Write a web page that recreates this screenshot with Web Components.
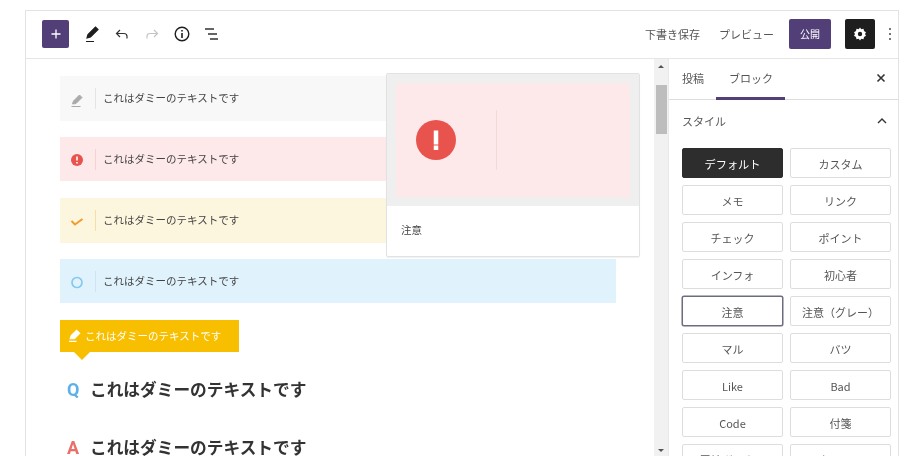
<!DOCTYPE html>
<html lang="ja">
<head>
<meta charset="utf-8">
<title>エディター</title>
<style>
  html, body { margin: 0; height: 456px; overflow: hidden; background: #fff; }
  body { font-family: "Noto Sans CJK JP", "Noto Sans", sans-serif; color: #444; }
</style>
</head>
<body>
<editor-frame>
  <editor-toolbar slot="top"></editor-toolbar>
  <editor-content slot="main">
    <notice-block kind="memo">これはダミーのテキストです</notice-block>
    <notice-block kind="alert">これはダミーのテキストです</notice-block>
    <notice-block kind="check">これはダミーのテキストです</notice-block>
    <notice-block kind="maru">これはダミーのテキストです</notice-block>
    <label-box>これはダミーのテキストです</label-box>
    <faq-line letter="Q" color="#5db1e8">これはダミーのテキストです</faq-line>
    <faq-line letter="A" color="#e8706a">これはダミーのテキストです</faq-line>
    <style-preview></style-preview>
  </editor-content>
  <editor-sidebar slot="side"></editor-sidebar>
</editor-frame>

<script>
// outer box of the editor, cut off by the bottom of the window
customElements.define('editor-frame', class extends HTMLElement {
  constructor() {
    super();
    this.attachShadow({ mode: 'open' }).innerHTML = `
      <style>
        :host { display: block; box-sizing: border-box; width: 874px; height: 446px; margin: 10px 0 0 25px;
          border: solid #e2e2e2; border-width: 1px 1px 0 1px; filter: blur(.45px); }
        .top { height: 47px; border-bottom: 1px solid #e6e6e6; }
        .body { display: flex; height: 397px; }
        .main { flex: 1; min-width: 0; position: relative; overflow: hidden; }
        .bar { width: 15px; background: #f1f1f1; border-right: 1px solid #e8e8e8; display: flex; flex-direction: column; align-items: center; box-sizing: border-box; flex: none; }
        .up, .down { width: 0; height: 0; border: 3px solid transparent; }
        .up { border-bottom: 3px solid #555; margin-top: 3px; }
        .thumb { width: 11px; height: 49px; background: #bdbdbd; margin-top: 17px; }
        .down { border-top: 3px solid #555; margin-top: auto; margin-bottom: 1px; }
        .side { width: 229px; flex: none; }
      </style>
      <div class="top"><slot name="top"></slot></div>
      <div class="body">
        <div class="main"><slot name="main"></slot></div>
        <div class="bar"><i class="up"></i><i class="thumb"></i><i class="down"></i></div>
        <div class="side"><slot name="side"></slot></div>
      </div>`;
  }
});

customElements.define('editor-toolbar', class extends HTMLElement {
  constructor() {
    super();
    this.attachShadow({ mode: 'open' }).innerHTML = `
      <style>
        :host { display: flex; align-items: center; height: 45px; padding-left: 16px; font-size: 11px; color: #555; }
        .add { width: 27px; height: 28px; border-radius: 2px; background: #523f78; display: grid; place-items: center; margin-right: 13px; }
        svg { display: block; flex: none; }
        .left { display: flex; align-items: center; }
        .left svg + svg { margin-left: 10px; }
        .right { margin-left: auto; display: flex; align-items: center; }
        .draft { margin-right: 19px; }
        .pub { width: 42px; height: 30px; border-radius: 2px; background: #523f78; color: #fff; display: grid; place-items: center; margin: 0 14px 0 15px; font-size: 10px; }
        .gear { width: 30px; height: 30px; border-radius: 2px; background: #1e1e1e; display: grid; place-items: center; }
        .more { margin: 0 6px 0 13px; }
      </style>
      <div class="left">
        <div class="add"><svg width="12" height="12" viewBox="0 0 12 12"><path d="M6 1.500v9M1.500 6h9" stroke="#fff" stroke-width="1.300"/></svg></div>
        <svg width="20" height="20" viewBox="0 0 20 20"><path d="M5 14l1-3.500 7.500-7.500 2.500 2.500-7.500 7.500zM4 17.500h8" fill="#1e1e1e" stroke="#1e1e1e" stroke-width="1.200"/></svg>
        <svg width="20" height="20" viewBox="0 0 20 20"><path d="M8 6L4.500 9.500 8 13M5 9.500h7q3 0 3 3v2" fill="none" stroke="#333" stroke-width="1.200"/></svg>
        <svg width="20" height="20" viewBox="0 0 20 20"><path d="M12 6l3.500 3.500L12 13M15 9.500H8q-3 0-3 3v2" fill="none" stroke="#c4c4c4" stroke-width="1.200"/></svg>
        <svg width="20" height="20" viewBox="0 0 20 20"><circle cx="10" cy="10" r="6.800" fill="none" stroke="#1e1e1e" stroke-width="1.400"/><path d="M10 9v5M10 6v1.600" stroke="#1e1e1e" stroke-width="1.600"/></svg>
        <svg width="20" height="20" viewBox="0 0 20 20"><path d="M3 5h9M6 10h9M8 15h8" stroke="#333" stroke-width="1.400"/></svg>
      </div>
      <div class="right">
        <span class="draft">下書き保存</span><span>プレビュー</span>
        <span class="pub">公開</span>
        <span class="gear"><svg width="16" height="16" viewBox="0 0 16 16"><path d="M8 1.500l1.300 1.800 2.200-.5.500 2.200 2 1.200L13 8l1 1.800-2 1.200-.5 2.200-2.200-.5L8 14.500l-1.300-1.800-2.200.5-.5-2.200-2-1.200L3 8 2 6.200l2-1.200.5-2.200 2.200.5z" fill="#fff"/><circle cx="8" cy="8" r="2.200" fill="#1e1e1e"/></svg></span>
        <svg class="more" width="4" height="14" viewBox="0 0 4 14"><path d="M2 1v2M2 6v2M2 11v2" stroke="#555" stroke-width="1.600"/></svg>
      </div>`;
  }
});

customElements.define('editor-content', class extends HTMLElement {
  constructor() {
    super();
    this.attachShadow({ mode: 'open' }).innerHTML = `
      <style>
        :host { display: block; height: 397px; padding: 17px 0 0 34px; box-sizing: border-box; }
      </style>
      <slot></slot>`;
  }
});

// icon and tint for each notice style
const NOTICE = {
  memo: { bg: '#f8f8f8', line: '#e4e4e4', h: 45, gap: 16, icon: '<path d="M3.500 12l1-3 6-6 2.500 2.500-6 6zM2.500 14.500h9" fill="#aaa" stroke="#aaa"/>' },
  alert: { bg: '#fde9ea', line: '#f2d4d4', h: 44, gap: 17, icon: '<circle cx="8" cy="8" r="6" fill="#e8534e"/><path d="M8 4.500v4M8 10v1.500" stroke="#fff" stroke-width="1.600"/>' },
  check: { bg: '#fdf6df', line: '#f5dfa8', h: 45, gap: 16, icon: '<path d="M2.500 7l3.500 3.500 7.500-5.500" fill="none" stroke="#f29a2e" stroke-width="2"/>' },
  maru: { bg: '#e0f3fd', line: '#cce4f4', h: 44, gap: 17, icon: '<circle cx="8" cy="8.500" r="5" fill="none" stroke="#86c8f0" stroke-width="1.700"/>' }
};

customElements.define('notice-block', class extends HTMLElement {
  constructor() {
    super();
    const n = NOTICE[this.getAttribute('kind')];
    this.attachShadow({ mode: 'open' }).innerHTML = `
      <style>
        :host { display: flex; align-items: center; width: 556px; height: ${n.h}px; margin-bottom: ${n.gap}px; background: ${n.bg}; font-size: 10.500px; color: #444; }
        svg { margin-left: 9px; flex: none; position: relative; top: 1px; }
        .txt { margin-left: 10px; padding-left: 7px; border-left: 1px solid ${n.line}; height: 21px; line-height: 19px; }
      </style>
      <svg width="16" height="16" viewBox="0 0 16 16">${n.icon}</svg>
      <span class="txt"><slot></slot></span>`;
  }
});

customElements.define('label-box', class extends HTMLElement {
  constructor() {
    super();
    this.attachShadow({ mode: 'open' }).innerHTML = `
      <style>
        :host { display: flex; align-items: center; width: 179px; height: 32px; background: #f8bf00; color: #fff; font-size: 10.500px; position: relative; box-sizing: border-box; padding: 0 0 2px 8px; }
        svg { margin-right: 2px; flex: none; }
        :host::after { content: ""; position: absolute; left: 14px; top: 32px; border: 8px solid transparent; border-top-color: #f8bf00; border-bottom-width: 0; }
      </style>
      <svg width="15" height="15" viewBox="0 0 14 14"><path d="M2 10l1-3 5-5 3 3-5 5zM1 12.500h7" fill="#fff" stroke="#fff"/></svg>
      <slot></slot>`;
  }
});

customElements.define('faq-line', class extends HTMLElement {
  constructor() {
    super();
    this.attachShadow({ mode: 'open' }).innerHTML = `
      <style>
        :host { display: flex; align-items: baseline; height: 24px; line-height: 24px; margin: 25px 0 0 7px; font-size: 16.700px; font-weight: 700; color: #333; }
        :host(:last-of-type) { margin-top: 34px; }
        b { width: 23px; font-family: Roboto, sans-serif; font-weight: 700; font-size: 18px; flex: none; }
      </style>
      <b style="color:${this.getAttribute('color')}">${this.getAttribute('letter')}</b>
      <slot></slot>`;
  }
});

// hover preview that lies over the notices
customElements.define('style-preview', class extends HTMLElement {
  constructor() {
    super();
    this.attachShadow({ mode: 'open' }).innerHTML = `
      <style>
        :host { position: absolute; left: 360px; top: 14px; width: 254px; height: 184px; box-sizing: border-box; background: #fff; border: 1px solid #e2e2e2; border-radius: 2px; box-shadow: 0 1px 1px rgba(0,0,0,.06); font-size: 10.500px; color: #444; }
        .shot { height: 132px; box-sizing: border-box; background: #efefef; padding: 9px; }
        .pink { height: 100%; background: #fde9ea; display: flex; align-items: center; padding-left: 20px; }
        .pink svg { flex: none; }
        .pink i { margin-left: 40px; width: 1px; height: 60px; background: #f2dada; }
        .name { display: flex; align-items: center; height: 46px; padding-left: 14px; }
      </style>
      <div class="shot"><div class="pink">
        <svg width="40" height="40" viewBox="0 0 40 40"><circle cx="20" cy="20" r="20" fill="#e8534e"/><path d="M20 10.500v14M20 25.500v4.500" stroke="#fff" stroke-width="4.500"/></svg>
        <i></i>
      </div></div>
      <div class="name">注意</div>`;
  }
});

customElements.define('style-button', class extends HTMLElement {
  constructor() {
    super();
    this.attachShadow({ mode: 'open' }).innerHTML = `
      <style>
        :host { display: grid; place-items: center; height: 30px; box-sizing: border-box; padding-top: 1px; border: 1px solid #ddd; border-radius: 2px; background: #fff; font-size: 11px; color: #555; overflow: hidden; }
        :host([on]) { background: #2d2d2d; border-color: #2d2d2d; color: #fff; font-size: 11.200px; }
        :host([hover]) { border-color: #6c6c80; box-shadow: 0 0 0 .5px #6c6c80; }
      </style>
      <slot></slot>`;
  }
});

customElements.define('editor-sidebar', class extends HTMLElement {
  constructor() {
    super();
    const names = ['デフォルト','カスタム','メモ','リンク','チェック','ポイント','インフォ','初心者','注意','注意（グレー）','マル','バツ','Like','Bad','Code','付箋','罫線ボックス','タイトル'];
    const buttons = names.map((n, i) =>
      `<style-button${i === 0 ? ' on' : ''}${i === 8 ? ' hover' : ''}>${n}</style-button>`).join('');
    this.attachShadow({ mode: 'open' }).innerHTML = `
      <style>
        :host { display: block; height: 397px; overflow: hidden; font-size: 11px; color: #555; }
        .tabs { display: flex; align-items: center; height: 41px; box-sizing: border-box; border-bottom: 1px solid #ddd; padding: 0 0 3px 13px; position: relative; }
        .tabs .act { margin-left: 25px; }
        .tabs::after { content: ""; position: absolute; left: 47px; width: 69px; bottom: -1px; height: 3px; background: #523f78; }
        .tabs svg { margin-left: auto; margin-right: 12px; }
        .head { display: flex; align-items: center; justify-content: space-between; height: 44px; padding: 0 11px 2px 13px; box-sizing: border-box; }
        .grid { display: grid; grid-template-columns: 101px 101px; column-gap: 7px; row-gap: 7px; padding-left: 13px; margin-top: 4px; }
      </style>
      <div class="tabs"><span>投稿</span><span class="act">ブロック</span>
        <svg width="10" height="10" viewBox="0 0 10 10"><path d="M1.500 1.500l7 7M8.500 1.500l-7 7" stroke="#333" stroke-width="1.600"/></svg>
      </div>
      <div class="head"><span>スタイル</span>
        <svg width="10" height="6" viewBox="0 0 10 6"><path d="M1 5l4-4 4 4" fill="none" stroke="#333" stroke-width="1.400"/></svg>
      </div>
      <div class="grid">${buttons}</div>`;
  }
});
</script>
</body>
</html>
